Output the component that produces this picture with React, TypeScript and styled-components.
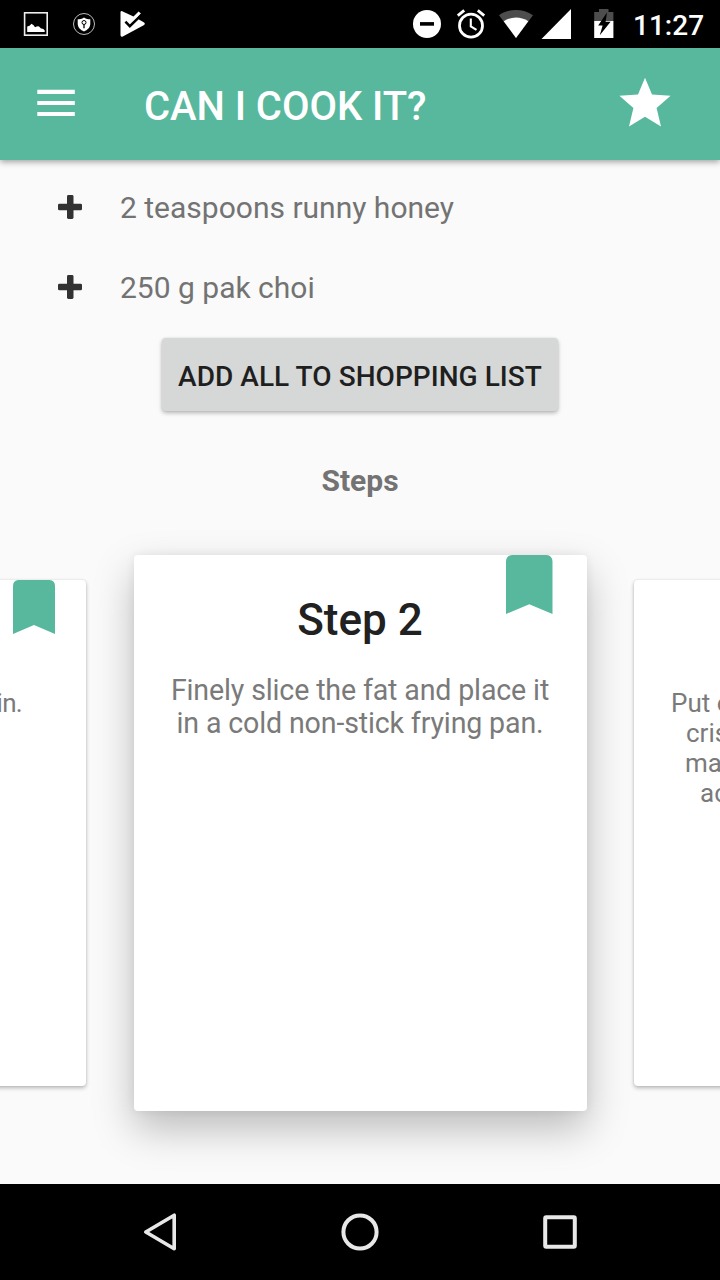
import React from "react";
import styled, { createGlobalStyle } from "styled-components";

const GlobalStyle = createGlobalStyle`
  * { box-sizing: border-box; }
  body { margin: 0; background: #fafafa; font-family: Roboto, "Liberation Sans", sans-serif; }
`;

const Screen = styled.div`
  width: 720px;
  height: 1280px;
  display: flex;
  flex-direction: column;
  overflow: hidden;
  background: #fafafa;
`;

const StatusBar = styled.div`
  height: 48px;
  flex: none;
  display: flex;
  align-items: center;
  justify-content: space-between;
  padding: 0 16px 0 12px;
  background: #000;
`;

const StatusGroup = styled.div`
  display: flex;
  align-items: center;
`;

const Glyph = styled.svg`
  display: block;
  flex: none;
`;

const Clock = styled.span`
  width: 71px;
  margin-left: 14px;
  color: #fff;
  font-size: 28px;
  font-weight: 500;
  line-height: 48px;
  padding-top: 3px;
  white-space: nowrap;
`;

const AppBar = styled.header`
  height: 112px;
  flex: none;
  display: flex;
  align-items: center;
  padding: 0 48px 0 32px;
  background: #57b89d;
  box-shadow: 0 2px 6px rgba(0, 0, 0, 0.36);
  z-index: 2;
`;

const IconButton = styled.button`
  display: flex;
  padding: 0;
  border: 0;
  background: none;
`;

const Title = styled.h1`
  flex: 1;
  margin: 0 0 0 64px;
  padding-top: 6px;
  color: #fff;
  font-size: 40px;
  font-weight: 500;
  line-height: 48px;
  letter-spacing: -0.06px;
`;

const Content = styled.main`
  flex: 1;
  min-height: 0;
  display: flex;
  flex-direction: column;
  align-items: center;
  padding-top: 7px;
`;

const Ingredient = styled.div`
  width: 100%;
  height: 80px;
  flex: none;
  display: flex;
  align-items: center;
  gap: 38px;
  padding-left: 58px;
`;

const IngredientName = styled.span`
  padding-top: 2px;
  color: #737373;
  font-size: 30px;
  line-height: 36px;
`;

const AddAllButton = styled.button`
  width: 396px;
  height: 73px;
  flex: none;
  margin-top: 11px;
  padding: 5px 0 0;
  border: 0;
  border-radius: 4px;
  background: #d6d8d7;
  box-shadow: 0 2px 4px rgba(0, 0, 0, 0.28), 0 0 2px rgba(0, 0, 0, 0.08);
  color: #1f1f1f;
  font: 500 28px/34px Roboto, "Liberation Sans", sans-serif;
  letter-spacing: 0.04px;
  white-space: nowrap;
`;

const SectionTitle = styled.h2`
  margin: 52px 0 0;
  color: #737373;
  font-size: 30px;
  font-weight: 700;
  line-height: 36px;
`;

const Carousel = styled.section`
  width: 1372px;
  height: 556px;
  flex: none;
  display: flex;
  align-items: center;
  justify-content: space-between;
  margin-top: 56px;
`;

const Card = styled.article<{ $active?: boolean }>`
  width: ${(p) => (p.$active ? 453 : 412)}px;
  height: ${(p) => (p.$active ? 556 : 506)}px;
  position: relative;
  flex: none;
  padding-top: ${(p) => (p.$active ? 39 : 35)}px;
  border-radius: 4px;
  background: #fff;
  box-shadow: ${(p) =>
    p.$active
      ? "0 18px 40px rgba(0, 0, 0, 0.25), 0 0 10px rgba(0, 0, 0, 0.07)"
      : "0 2px 4px rgba(0, 0, 0, 0.27), 0 0 2px rgba(0, 0, 0, 0.1)"};
  z-index: ${(p) => (p.$active ? 0 : 1)};
  text-align: center;
  color: #7a7a7a;
  font-size: ${(p) => (p.$active ? 28.6 : 26)}px;
  line-height: ${(p) => (p.$active ? 33 : 30)}px;
  letter-spacing: ${(p) => (p.$active ? "-0.15px" : "normal")};
`;

const Ribbon = styled.svg<{ $active?: boolean }>`
  position: absolute;
  top: 0;
  right: ${(p) => (p.$active ? 34 : 31)}px;
  width: ${(p) => (p.$active ? 46.5 : 42)}px;
  height: ${(p) => (p.$active ? 59 : 54)}px;
  fill: #57b89d;
`;

const StepTitle = styled.h3<{ $active?: boolean }>`
  margin: 0 0 ${(p) => (p.$active ? 28 : 26)}px;
  color: #212121;
  font-size: ${(p) => (p.$active ? 44 : 40)}px;
  font-weight: 500;
  line-height: ${(p) => (p.$active ? 52 : 47)}px;
  letter-spacing: normal;
`;

const StepText = styled.p`
  margin: 0;
`;

const StepLine = styled.span<{ $indent?: number; $end?: number }>`
  display: block;
  padding-left: ${(p) => p.$indent ?? 0}px;
  padding-right: ${(p) => p.$end ?? 0}px;
  text-align: ${(p) => (p.$indent ? "left" : p.$end ? "right" : "center")};
  letter-spacing: ${(p) => (p.$end ? "-0.7px" : "inherit")};
  white-space: nowrap;
`;

const NavBar = styled.nav`
  height: 96px;
  flex: none;
  display: flex;
  align-items: center;
  justify-content: center;
  gap: 152px;
  background: #000;
  z-index: 2;
`;

const Plus = () => (
  <Glyph width="24" height="24" viewBox="0 0 24 24" fill="#323232">
    <rect x="9" y="0" width="6.5" height="24" rx="1.4" />
    <rect x="0" y="8.7" width="24" height="6.6" rx="1.4" />
  </Glyph>
);

const Bookmark = ({ active }: { active?: boolean }) => (
  <Ribbon $active={active} viewBox="0 0 42 54" preserveAspectRatio="none">
    <path d="M5.5 0H36.5Q42 .5 42 6V54L21 45L0 54V6Q0 .5 5.5 0Z" />
  </Ribbon>
);

const NotificationIcons = () => (
  <StatusGroup>
    <Glyph width="48" height="48" viewBox="12 0 48 48" fill="#fff">
      <rect x="24.6" y="12.8" width="22.6" height="22.4" fill="none" stroke="#eee" strokeWidth="1.6" />
      <path d="M27.2 26.5Q29.7 26.2 31.5 23.8Q34 25.2 35 27.2Q37.5 26 39 26.5L41 28.5Q43.5 28.2 44.7 30.5V32H27.2Z" />
    </Glyph>
    <Glyph width="48" height="48" viewBox="60 0 48 48">
      <circle cx="84" cy="24" r="10.5" fill="none" stroke="#bbb" strokeWidth="1" />
      <path d="M84 17.4C86.2 18.9 88.3 19.2 90.3 19.2V23.5C90.3 27.5 87.5 30 84 31.4C80.5 30 77.7 27.5 77.7 23.5V19.2C79.7 19.2 81.8 18.9 84 17.4Z" fill="#fff" />
      <circle cx="84" cy="22.5" r="2" fill="none" stroke="#000" strokeWidth="1" />
      <path d="M84 24.5V28.3" stroke="#000" strokeWidth="1.3" />
    </Glyph>
    <Glyph width="48" height="48" viewBox="108 0 48 48">
      <path d="M120.5 12.5Q120.5 10.8 122.2 11.2L133.5 16.5L138.6 11.6L140.9 13.4L136.8 18.2L143.7 22.2Q146 23.8 143.7 25.3L122.8 36.4Q120.5 37.3 120.5 35Z" fill="#fff" />
      <path d="M125.4 21.6L129.8 26.2L141.5 14.9" fill="none" stroke="#000" strokeWidth="2.5" />
    </Glyph>
  </StatusGroup>
);

const SystemIcons = () => (
  <Glyph width="208" height="48" viewBox="411 0 208 48" fill="#fff">
    <circle cx="427" cy="24" r="14" />
    <rect x="420" y="22.1" width="14" height="3.6" fill="#000" />
    <circle cx="471" cy="25.7" r="11.5" fill="none" stroke="#fff" strokeWidth="2.8" />
    <path d="M470.8 18.5V26.3L476.5 29.8" fill="none" stroke="#fff" strokeWidth="2.1" />
    <path d="M457.8 15.6L464.2 10.3M484.2 15.6L477.8 10.3" stroke="#fff" strokeWidth="2.8" />
    <path d="M499 15.2C509 8.2 523 8.2 533 15.2L516 38Z" fill="#4d4d4d" />
    <path d="M503.7 21.2C511.5 16.2 520.5 16.2 528.3 21.2L516 38Z" />
    <path d="M571 9V39H541.5Z" />
    <path d="M599 9H608.5V12H613.4V21.5H594.2V12H599Z" fill="#4d4d4d" />
    <rect x="594.2" y="21" width="19.2" height="17" />
    <path d="M607 12.5L605.6 21.8H610.6L599.8 35.2L602.6 25.6H598.2Z" fill="#000" />
  </Glyph>
);

export default function App() {
  return (
    <>
      <GlobalStyle />
      <Screen>
        <StatusBar>
          <NotificationIcons />
          <StatusGroup>
            <SystemIcons />
            <Clock>11:27</Clock>
          </StatusGroup>
        </StatusBar>
        <AppBar>
          <IconButton aria-label="Menu">
            <Glyph width="48" height="48" viewBox="0 0 48 48" fill="#fff">
              <path d="M5.3 9.8H42.8V14H5.3ZM5.3 20.9H42.8V25H5.3ZM5.3 31.9H42.8V36.1H5.3Z" />
            </Glyph>
          </IconButton>
          <Title>CAN I COOK IT?</Title>
          <IconButton aria-label="Favourite">
            <Glyph width="54" height="54" viewBox="618 77 54 54" fill="#fff">
              <path d="M645 77.7L652 94.4L670.6 95.8L656.6 108L661 126.4L645 116.7L629 126.4L633.4 108L619.4 95.8L638 94.4Z" />
            </Glyph>
          </IconButton>
        </AppBar>
        <Content>
          <Ingredient><Plus /><IngredientName>2 teaspoons runny honey</IngredientName></Ingredient>
          <Ingredient><Plus /><IngredientName>250 g pak choi</IngredientName></Ingredient>
          <AddAllButton>ADD ALL TO SHOPPING LIST</AddAllButton>
          <SectionTitle>Steps</SectionTitle>
          <Carousel>
            <Card>
              <Bookmark />
              <StepTitle>&nbsp;</StepTitle>
              <StepText><StepLine $end={64}>in.</StepLine></StepText>
            </Card>
            <Card $active>
              <Bookmark active />
              <StepTitle $active>Step 2</StepTitle>
              <StepText>
                <StepLine>Finely slice the fat and place it</StepLine>
                <StepLine>in a cold non-stick frying pan.</StepLine>
              </StepText>
            </Card>
            <Card>
              <StepTitle>&nbsp;</StepTitle>
              <StepText>
                <StepLine $indent={37}>Put o</StepLine>
                <StepLine $indent={52}>cris</StepLine>
                <StepLine $indent={51}>ma</StepLine>
                <StepLine $indent={66}>ac</StepLine>
              </StepText>
            </Card>
          </Carousel>
        </Content>
        <NavBar>
          <Glyph width="48" height="48" viewBox="136 1208 48 48" fill="none" stroke="#e8e8e8" strokeWidth="3.6" strokeLinejoin="round">
            <path d="M174.2 1215.2V1248.8L145.8 1232Z" />
          </Glyph>
          <Glyph width="48" height="48" viewBox="336 1208 48 48" fill="none" stroke="#e8e8e8" strokeWidth="4">
            <circle cx="360" cy="1232" r="16.6" />
          </Glyph>
          <Glyph width="48" height="48" viewBox="536 1208 48 48" fill="none" stroke="#e8e8e8" strokeWidth="4">
            <rect x="545.2" y="1217.3" width="29.6" height="29.4" rx="1" />
          </Glyph>
        </NavBar>
      </Screen>
    </>
  );
}
